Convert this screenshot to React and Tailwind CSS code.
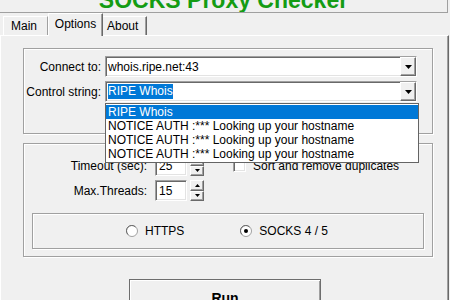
const sunken =
  "border border-t-[#a0a0a0] border-l-[#a0a0a0] border-b-white border-r-white shadow-[inset_1px_1px_0_#696969,inset_-1px_-1px_0_#e3e3e3]";
const raised =
  "border border-t-white border-l-white border-b-[#696969] border-r-[#696969] shadow-[inset_-1px_-1px_0_#a0a0a0] bg-[#f0f0f0]";
const etched = "border border-[#a0a0a0] shadow-[inset_1px_1px_0_#fff,1px_1px_0_#fff]";

const Arrow = ({ up, w = 7, h = 4 }) => (
  <svg width={w} height={h} viewBox={`0 0 ${w} ${h}`}>
    <polygon points={up ? `0,${h} ${w},${h} ${w / 2},0` : `0,0 ${w},0 ${w / 2},${h}`} fill="#000" />
  </svg>
);

const Combo = ({ children, list }) => (
  <div className="relative">
    <div className={`w-[312px] h-[21px] bg-white flex items-stretch ${sunken}`}>
      <div className="flex-1 flex items-center pl-[2px] py-[1px]">{children}</div>
      <div className={`w-[16px] flex items-center justify-center ${raised}`}>
        <Arrow />
      </div>
    </div>
    {list}
  </div>
);

const Spin = ({ value }) => (
  <div className="flex items-center gap-[3px]">
    <div className={`w-[32px] h-[21px] bg-white flex items-center pl-[3px] ${sunken}`}>{value}</div>
    <div className="flex flex-col w-[14px] h-[21px]">
      <div className={`flex-1 flex items-center justify-center ${raised}`}>
        <Arrow up w={5} h={3} />
      </div>
      <div className={`flex-1 flex items-center justify-center ${raised}`}>
        <Arrow w={5} h={3} />
      </div>
    </div>
  </div>
);

const Radio = ({ checked }) => (
  <svg width="12" height="12" viewBox="0 0 12 12">
    <circle cx="6" cy="6" r="5.5" fill="#fff" stroke="#a0a0a0" />
    <path d="M2 9.5 A5 5 0 0 1 9.5 2" fill="none" stroke="#696969" />
    {checked && <circle cx="6" cy="6" r="2" fill="#000" />}
  </svg>
);

const items = [
  "RIPE Whois",
  "NOTICE AUTH :*** Looking up your hostname",
  "NOTICE AUTH :*** Looking up your hostname",
  "NOTICE AUTH :*** Looking up your hostname",
];

export default function App() {
  return (
    <div className="w-[450px] h-[300px] overflow-hidden bg-[#f0f0f0] font-['Liberation_Sans',Arial,sans-serif] text-[12px] text-black flex flex-col">
      <div className="h-[13px] w-[448px] border-b border-r border-[#a0a0a0] overflow-hidden flex items-end justify-center shrink-0">
        <span className="text-[23px] font-bold leading-[23px] text-[#149c14] whitespace-nowrap">SOCKS Proxy Checker</span>
      </div>

      {/* tabs */}
      <div className="h-[22px] flex items-end pl-[3px] shrink-0">
        <div className="w-[45px] h-[19px] flex items-center pl-[7px] border-t border-l border-white border-r-[#a0a0a0] border-r">
          Main
        </div>
        <div className="w-[55px] h-[23px] -mb-px relative z-10 bg-[#f0f0f0] flex items-center justify-center pb-[2px] border-t border-l border-white border-r border-r-[#696969] shadow-[inset_-1px_0_0_#a0a0a0]">
          Options
        </div>
        <div className="w-[44px] h-[19px] flex items-center pl-[4px] border-t border-white border-r border-r-[#696969] shadow-[inset_-1px_0_0_#a0a0a0]">
          About
        </div>
      </div>

      {/* tab page */}
      <div className="flex-1 w-[449px] border-t border-l border-white border-r border-r-[#696969] shadow-[inset_-1px_0_0_#a0a0a0] pl-[22px] pt-[12px]">
        <div className={`w-[410px] h-[86px] pt-[7px] flex flex-col gap-[4px] ${etched}`}>
          <div className="flex items-center gap-[4px]">
            <div className="w-[77px] text-right">Connect to:</div>
            <Combo>whois.ripe.net:43</Combo>
          </div>
          <div className="flex items-center gap-[4px] relative z-20">
            <div className="w-[77px] text-right">Control string:</div>
            <Combo
              list={
                <div className="absolute left-0 top-[22px] w-[314px] bg-white border border-[#646464] pt-[1px] pb-[1px]">
                  {items.map((t, i) => (
                    <div
                      key={i}
                      className={`h-[14px] leading-[14px] pl-[2px] whitespace-nowrap ${i === 0 ? "bg-[#0078d7] text-white" : ""}`}
                    >
                      {t}
                    </div>
                  ))}
                </div>
              }
            >
              <span className="bg-[#0078d7] text-white leading-[15px]">RIPE Whois</span>
            </Combo>
          </div>
        </div>

        <div className={`w-[410px] h-[114px] mt-[9px] pt-[11px] flex flex-col ${etched}`}>
          <div className="flex items-center">
            <div className="w-[123px] text-right mr-[8px]">Timeout (sec):</div>
            <Spin value="25" />
            <div className={`ml-[29px] w-[13px] h-[13px] bg-white ${sunken}`} />
            <span className="ml-[7px]">Sort and remove duplicates</span>
          </div>
          <div className="flex items-center mt-[4px]">
            <div className="w-[123px] text-right mr-[8px]">Max.Threads:</div>
            <Spin value="15" />
          </div>
          <div className={`ml-[8px] mt-[12px] w-[392px] h-[36px] flex items-center pl-[93px] ${etched}`}>
            <Radio />
            <span className="ml-[7px]">HTTPS</span>
            <span className="ml-[56px] flex items-center">
              <Radio checked />
            </span>
            <span className="ml-[7px]">SOCKS 4 / 5</span>
          </div>
        </div>

        <div className="ml-[106px] mt-[22px] w-[192px] h-[30px] border border-[#6d6d6d] shadow-[inset_1px_1px_0_#fff,inset_-1px_-1px_0_#a0a0a0] flex items-center justify-center pt-[8px]">
          <span className="text-[14px] font-bold">Run</span>
        </div>
      </div>
    </div>
  );
}
